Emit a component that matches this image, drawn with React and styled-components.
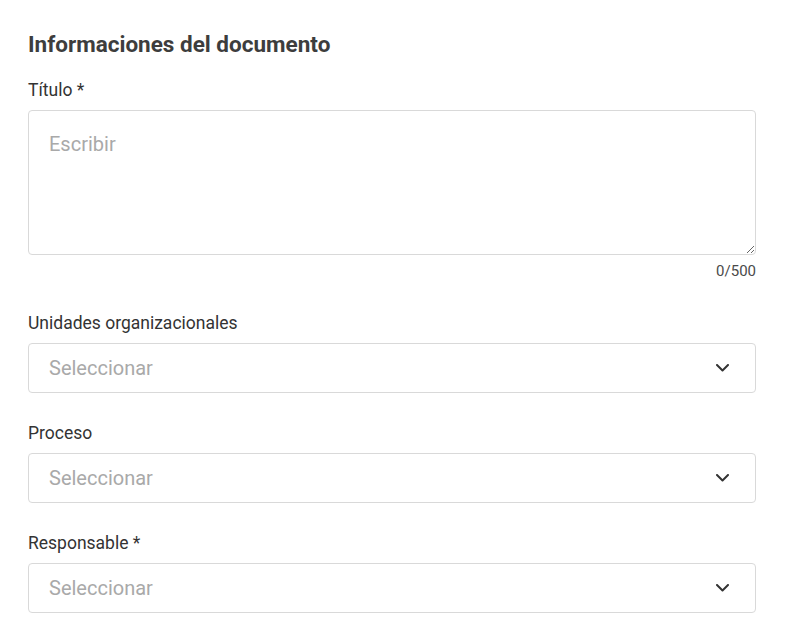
import styled, { createGlobalStyle } from "styled-components";
import { useState } from "react";

const GlobalStyle = createGlobalStyle`
  * { box-sizing: border-box; }
  body {
    margin: 0;
    background: #ffffff;
    font-family: Roboto, "Noto Sans", Arial, sans-serif;
    color: #333333;
  }
`;

const Wrapper = styled.section`
  padding: 30px 29px 20px 28px;
  display: flex;
  flex-direction: column;
`;

const Heading = styled.h2`
  margin: 0 0 22px 0;
  font-size: 22.5px;
  line-height: 28px;
  font-weight: 700;
  color: #3d3d3d;
`;

const Field = styled.div`
  display: flex;
  flex-direction: column;
  margin-bottom: ${({ $gap }) => $gap || 30}px;
`;

const Label = styled.label`
  font-size: 17.5px;
  line-height: 20px;
  color: #333333;
  margin-bottom: 10px;
`;

const TextArea = styled.textarea`
  width: 100%;
  height: 145px;
  padding: 21px 20px;
  border: 1px solid #d9d9d9;
  border-radius: 4px;
  font-family: inherit;
  font-size: 20px;
  color: #333333;
  resize: vertical;
  outline: none;

  &::placeholder {
    color: #a9a9a9;
  }
`;

const Counter = styled.span`
  align-self: flex-end;
  margin-top: 8px;
  font-size: 15px;
  line-height: 16px;
  color: #4a4a4a;
`;

const SelectBox = styled.div`
  height: 50px;
  padding: 0 26px 1px 20px;
  border: 1px solid #d9d9d9;
  border-radius: 4px;
  display: flex;
  align-items: center;
  justify-content: space-between;
  cursor: pointer;
`;

const Placeholder = styled.span`
  font-size: 20px;
  color: #a9a9a9;
`;

const Chevron = () => (
  <svg width="13" height="8" viewBox="0 0 13 8" fill="none">
    <path d="M1 1 L6.5 6.5 L12 1" stroke="#333333" strokeWidth="2" strokeLinecap="round" strokeLinejoin="round" />
  </svg>
);

const Select = ({ placeholder }) => (
  <SelectBox>
    <Placeholder>{placeholder}</Placeholder>
    <Chevron />
  </SelectBox>
);

const App = () => {
  const [title, setTitle] = useState("");

  return (
    <>
      <GlobalStyle />
      <Wrapper>
        <Heading>Informaciones del documento</Heading>

        <Field $gap={34}>
          <Label>Título *</Label>
          <TextArea
            placeholder="Escribir"
            maxLength={500}
            value={title}
            onChange={(e) => setTitle(e.target.value)}
          />
          <Counter>{title.length}/500</Counter>
        </Field>

        <Field>
          <Label>Unidades organizacionales</Label>
          <Select placeholder="Seleccionar" />
        </Field>

        <Field>
          <Label>Proceso</Label>
          <Select placeholder="Seleccionar" />
        </Field>

        <Field>
          <Label>Responsable *</Label>
          <Select placeholder="Seleccionar" />
        </Field>
      </Wrapper>
    </>
  );
};

export default App;
